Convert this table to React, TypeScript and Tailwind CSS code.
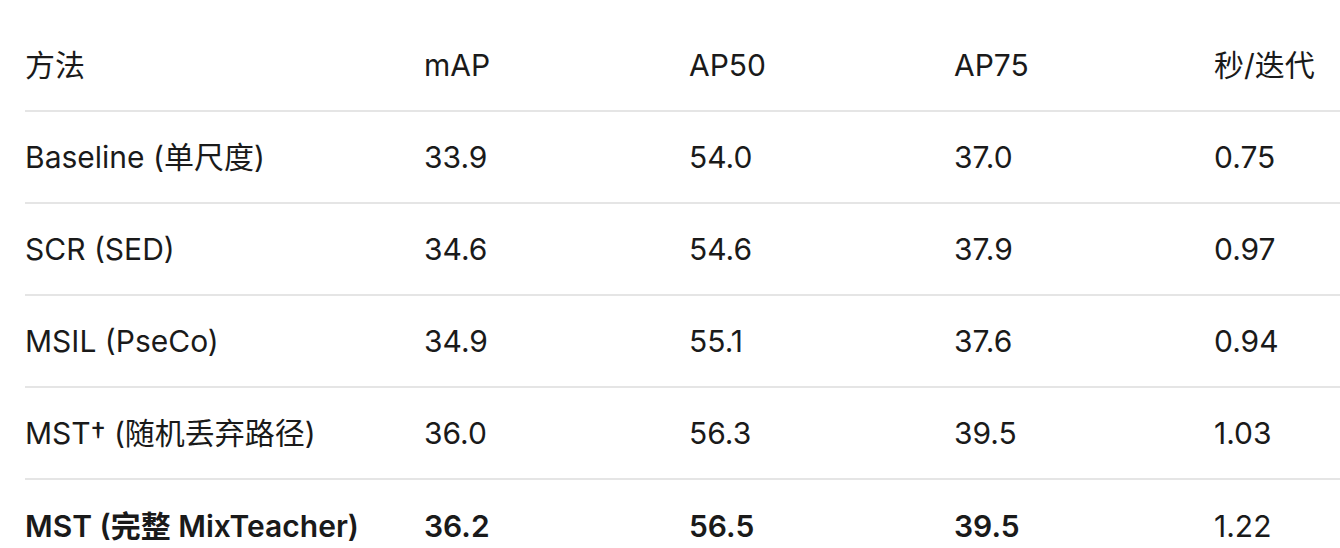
const headers = ['方法', 'mAP', 'AP50', 'AP75', '秒/迭代']

const rows = [
  { cells: ['Baseline (单尺度)', '33.9', '54.0', '37.0', '0.75'], bold: false },
  { cells: ['SCR (SED)', '34.6', '54.6', '37.9', '0.97'], bold: false },
  { cells: ['MSIL (PseCo)', '34.9', '55.1', '37.6', '0.94'], bold: false },
  { cells: ['MST† (随机丢弃路径)', '36.0', '56.3', '39.5', '1.03'], bold: false },
  { cells: ['MST (完整 MixTeacher)', '36.2', '56.5', '39.5', '1.22'], bold: true },
]

const cols = 'grid grid-cols-[399px_265px_265px_260px_1fr]'

export default function App() {
  return (
    <div
      className="w-[1340px] h-[548px] overflow-hidden bg-white pl-[25px] pt-[20px] text-[30px] text-[#1a1a1a]"
      style={{ fontFamily: 'Inter, "Noto Sans CJK SC", sans-serif' }}
    >
      <div className={`${cols} h-[92px] items-center border-b-2 border-[#e5e5e5]`}>
        {headers.map((h) => (
          <div key={h} className="whitespace-nowrap">
            {h}
          </div>
        ))}
      </div>
      {rows.map((r, i) => (
        <div
          key={i}
          className={`${cols} h-[92px] items-center ${i < rows.length - 1 ? 'border-b-2 border-[#e5e5e5]' : ''}`}
        >
          {r.cells.map((c, j) => (
            <div key={j} className={`whitespace-nowrap ${r.bold && j < 4 ? 'font-semibold' : ''}`}>
              {c}
            </div>
          ))}
        </div>
      ))}
    </div>
  )
}
